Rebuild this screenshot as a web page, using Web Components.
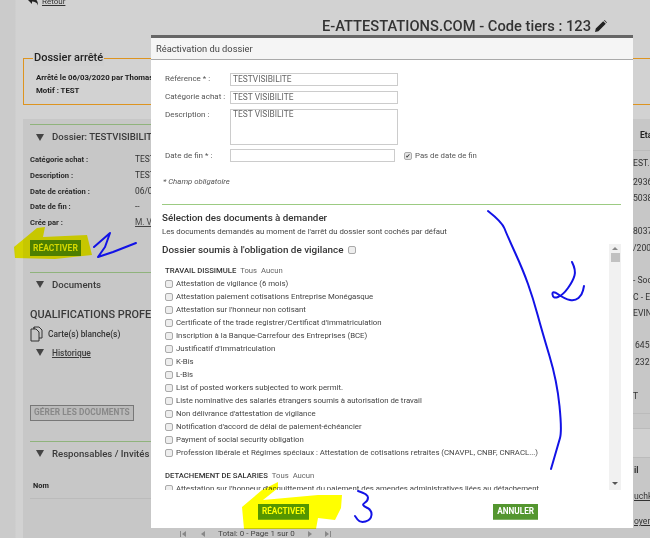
<!DOCTYPE html>
<html lang="fr">
<head>
<meta charset="utf-8">
<title>Réactivation du dossier</title>
<style>
  html, body { margin: 0; padding: 0; background: #d0d0d0; }
  body { font-family: Roboto, "Liberation Sans", sans-serif; overflow: hidden; }
</style>
</head>
<body>
<attest-page>
  <arret-box slot="top"></arret-box>
  <dossier-panel slot="left"></dossier-panel>
  <side-column slot="right"></side-column>
  <pager-bar slot="bottom"></pager-bar>
  <reactivation-modal slot="overlay"></reactivation-modal>
  <hand-notes slot="overlay"></hand-notes>
</attest-page>

<script>
// Page de fond : entete, encadre, deux colonnes, et ce qui passe par dessus
class AttestPage extends HTMLElement {
    constructor() {
        super();
        this.attachShadow({ mode: 'open' });
        this.shadowRoot.innerHTML = `
            <style>
                :host { display: block; position: relative; width: 650px; height: 538px; overflow: hidden; background: #d0d0d0; color: #333; filter: blur(.35px); }
                .rail { display: flex; flex-direction: column; height: 100%; padding-left: 15px; box-sizing: border-box; background: linear-gradient(90deg, #cbcbcb 0, #cbcbcb 15px, #d2d2d2 16px); }
                .head { height: 58px; padding-left: 12px; box-sizing: border-box; display: flex; justify-content: space-between; align-items: flex-start; }
                .back { display: flex; gap: 3px; font-size: 8px; margin-top: -6px; height: 14px; align-items: center; }
                .back a { color: #333; text-decoration: underline; }
                .title { margin: 16px 43px 0 0; font: 500 14.7px/20px Roboto, sans-serif; color: #333; display: flex; gap: 4px; align-items: center; white-space: nowrap; }
                .main { flex: none; height: 411px; display: grid; grid-template-columns: 129px 22px; justify-content: space-between; margin: 14px 0 0 8px; background: #c7c7c7; overflow: hidden; }
            </style>
            <div class="rail">
                <div class="head">
                    <div class="back">
                        <svg width="12" height="12" viewBox="0 0 12 12"><path d="M1 5 5 1v2.5c4 0 6 2 6 7-1-3-3-4-6-4V9z" fill="#222"/></svg>
                        <a>Retour</a>
                    </div>
                    <div class="title">E-ATTESTATIONS.COM - Code tiers : 123
                        <svg width="12" height="12" viewBox="0 0 12 12"><path d="M0 12l.8-3.4L8.2 1.2l2.6 2.6-7.4 7.4zM9 .5l.6-.5 2.4 2.4-.5.6z" fill="#222"/></svg>
                    </div>
                </div>
                <slot name="top"></slot>
                <div class="main">
                    <slot name="left"></slot>
                    <slot name="right"></slot>
                </div>
                <slot name="bottom"></slot>
            </div>
            <slot name="overlay"></slot>
        `;
    }
}
customElements.define('attest-page', AttestPage);

// Encadre orange "Dossier arrete"
class ArretBox extends HTMLElement {
    constructor() {
        super();
        this.attachShadow({ mode: 'open' });
        this.shadowRoot.innerHTML = `
            <style>
                :host { display: block; margin-left: 8px; height: 47px; border: 1px solid #dd9420; border-right: 0; box-sizing: border-box; position: relative; padding: 13px 0 0 12px; font: 700 7.8px/12.5px Roboto, sans-serif; color: #222; white-space: nowrap; }
                h2 { position: absolute; left: 9px; top: -9px; margin: 0; padding: 0 1px; background: #d0d0d0; font: 500 11px/16px Roboto, sans-serif; color: #222; }
            </style>
            <h2>Dossier arrêté</h2>
            <div>Arrêté le 06/03/2020 par Thomas</div>
            <div>Motif : TEST</div>
        `;
    }
}
customElements.define('arret-box', ArretBox);

// Titre de section depliable (triangle + libelle)
class FoldTitle extends HTMLElement {
    constructor() {
        super();
        this.attachShadow({ mode: 'open' });
        this.shadowRoot.innerHTML = `
            <style>
                :host { display: flex; align-items: center; gap: 8px; padding-left: 6px; font: 500 9.6px/14px Roboto, sans-serif; color: #3a3a3a; white-space: nowrap; }
                i { width: 0; height: 0; border: 4px solid transparent; border-top: 7px solid #444; border-bottom: 0; }
            </style>
            <i></i><slot></slot>
        `;
    }
}
customElements.define('fold-title', FoldTitle);

// Colonne gauche : on n'ecrit que ce qui depasse de la modale
class DossierPanel extends HTMLElement {
    constructor() {
        super();
        this.attachShadow({ mode: 'open' });
        this.shadowRoot.innerHTML = `
            <style>
                :host { display: block; padding: 5px 0 0 7px; overflow: hidden; white-space: nowrap; box-sizing: border-box; font: 400 7.6px/16px Roboto, sans-serif; color: #333; }
                .line { border-top: 1px solid #8fb37c; }
                .top { padding-top: 5px; }
                dl { margin: 8px 0 0; display: grid; grid-template-columns: 105px 1fr; grid-auto-rows: 15.8px; }
                dt { font-weight: 700; color: #2a2a2a; line-height: 15.8px; }
                dd { margin: 0; font-size: 8.4px; line-height: 15.8px; }
                dd u { color: #444; }
                .btn { display: inline-block; height: 16px; padding: 0 3px; line-height: 16px; background: #4d7f20; color: #d5d83a; font-size: 8.5px; font-weight: 700; }
                .qual { font: 500 10.9px/16px Roboto, sans-serif; color: #3a3a3a; margin-top: 15px; }
                .carte { display: flex; gap: 5px; align-items: center; font: 500 8.4px/16px Roboto, sans-serif; margin-top: 2px; height: 18px; }
                .gerer { display: inline-block; box-sizing: border-box; height: 16px; margin-top: 45px; padding: 0 3px; line-height: 13px; border: 1.5px solid #777; background: #bababa; color: #888; font-size: 8.3px; font-weight: 700; letter-spacing: .1px; }
                table { border-collapse: collapse; width: 100%; margin-top: 19px; }
                td { font: 700 7.4px/12px Roboto, sans-serif; color: #222; padding: 0 3px 6px; border-bottom: 1px solid #bbb; }
            </style>
            <div class="line top"><fold-title>Dossier: TESTVISIBILIT</fold-title></div>
            <dl>
                <dt>Catégorie achat :</dt><dd>TEST</dd>
                <dt>Description :</dt><dd>TEST</dd>
                <dt>Date de création :</dt><dd>06/0</dd>
                <dt>Date de fin :</dt><dd>--</dd>
                <dt>Crée par :</dt><dd><u>M. V</u></dd>
            </dl>
            <div style="margin-top:9px;height:16px"><span class="btn">RÉACTIVER</span></div>
            <div class="line" style="margin-top:16px;padding-top:5px"><fold-title>Documents</fold-title></div>
            <div class="qual">QUALIFICATIONS PROFES</div>
            <div class="carte">
                <svg width="13" height="16" viewBox="0 0 13 16"><path d="M4 3V1h5l3 3v8H9M4 1v2H1v12h8V6L6 3H4" fill="none" stroke="#333" stroke-width="1"/></svg>
                <span>Carte(s) blanche(s)</span>
            </div>
            <fold-title style="margin-top:3px;font-size:8.4px"><u>Historique</u></fold-title>
            <div><span class="gerer">GÉRER LES DOCUMENTS</span></div>
            <div class="line" style="margin-top:20px;padding-top:5px"><fold-title>Responsables / Invités</fold-title></div>
            <table><tr><td>Nom</td></tr></table>
        `;
    }
}
customElements.define('dossier-panel', DossierPanel);

// Bout de colonne droite qui depasse de la modale
class SideColumn extends HTMLElement {
    constructor() {
        super();
        this.attachShadow({ mode: 'open' });
        const rows = [
            ['Eta', 11, 'font-weight:700;color:#222;padding-left:9px'],
            ['EST.', 10, 'border-top:1px solid #bbb;padding-top:7px;padding-left:2px'],
            ['2936', 9, 'padding-left:2px'], ['5038', 6, 'padding-left:2px'], ['8037', 23, 'padding-left:2px'], ['/200', 7, 'padding-left:2px'],
            ['- Soc', 22, 'padding-left:2px'], ['C - E', 7, 'padding-left:2px'], ['EVIN', 6, 'padding-left:2px'],
            ['645', 22, 'padding-left:4px'], ['232', 7, 'padding-left:4px'],
            ['T', 24, 'padding-left:2px']
        ];
        this.shadowRoot.innerHTML = `
            <style>
                :host { display: block; overflow: hidden; white-space: nowrap; font: 400 8.6px/10px Roboto, sans-serif; color: #333; padding-left: 3px; box-sizing: border-box; }
                .rule { border-top: 1px solid #bbb; }
            </style>
            ${rows.map(r => `<div style="margin-top:${r[1]}px;${r[2]}">${r[0]}</div>`).join('')}
            <div class="rule" style="margin-top:12px;height:14px"></div>
            <div class="rule" style="height:28px;background:#d0d0d0"></div>
            <div style="font-weight:700;padding-left:3px;border-top:1px solid #bbb;padding-top:7px">il</div>
            <div style="margin-top:16px;text-decoration:underline;padding-left:3px">uchk</div>
            <div style="margin-top:15px;text-decoration:underline;padding-left:3px">oyer</div>
        `;
    }
}
customElements.define('side-column', SideColumn);

// Pagination du tableau, presque entierement sous la modale
class PagerBar extends HTMLElement {
    constructor() {
        super();
        this.attachShadow({ mode: 'open' });
        this.shadowRoot.innerHTML = `
            <style>
                :host { display: flex; align-items: center; flex: none; height: 8px; margin-left: 8px; padding-left: 156px; background: #c7c7c7; font: 400 8px/8px Roboto, sans-serif; color: #444; white-space: nowrap; overflow: hidden; }
                svg { flex: none; }
                span { margin: 0 12px; }
            </style>
            <svg width="8" height="8" viewBox="0 0 8 8" style="margin-right:13px"><path d="M1 1h1v6H1zM7 1v6L3 4z" fill="#888"/></svg>
            <svg width="6" height="8" viewBox="0 0 6 8"><path d="M5 1v6L1 4z" fill="#888"/></svg>
            <span>Total: 0 - Page 1 sur 0</span>
            <svg width="6" height="8" viewBox="0 0 6 8" style="margin-right:11px"><path d="M1 1v6l4-3z" fill="#888"/></svg>
            <svg width="8" height="8" viewBox="0 0 8 8"><path d="M1 1v6l4-3zM6 1h1v6H6z" fill="#888"/></svg>
        `;
    }
}
customElements.define('pager-bar', PagerBar);

// Case a cocher + libelle
class DocCheck extends HTMLElement {
    constructor() {
        super();
        this.attachShadow({ mode: 'open' });
        this.shadowRoot.innerHTML = `
            <style>
                :host { display: flex; align-items: center; gap: 3px; height: 13.03px; white-space: nowrap; font: 400 7.8px/13px Roboto, sans-serif; color: #444; }
                i { flex: none; width: 6px; height: 6px; border: 1px solid #aaa; border-radius: 2px; background: #eee; }
            </style>
            <i></i><span><slot></slot></span>
        `;
    }
}
customElements.define('doc-check', DocCheck);

// Titre de groupe de documents
class DocGroup extends HTMLElement {
    constructor() {
        super();
        this.attachShadow({ mode: 'open' });
        this.shadowRoot.innerHTML = `
            <style>
                :host { display: flex; gap: 4px; height: 13px; align-items: center; white-space: nowrap; font: 400 7.7px/13px Roboto, sans-serif; color: #666; }
                b { font-weight: 500; color: #333; }
            </style>
            <b><slot></slot></b><span>Tous</span><span>Aucun</span>
        `;
    }
}
customElements.define('doc-group', DocGroup);

// Modale de reactivation
class ReactivationModal extends HTMLElement {
    constructor() {
        super();
        this.attachShadow({ mode: 'open' });
        const docs = [
            'Attestation de vigilance (6 mois)',
            'Attestation paiement cotisations Entreprise Monégasque',
            'Attestation sur l\'honneur non cotisant',
            'Certificate of the trade registrer/Certificat d\'immatriculation',
            'Inscription à la Banque-Carrefour des Entreprises (BCE)',
            'Justificatif d\'immatriculation',
            'K-Bis',
            'L-Bis',
            'List of posted workers subjected to work permit.',
            'Liste nominative des salariés étrangers soumis à autorisation de travail',
            'Non délivrance d\'attestation de vigilance',
            'Notification d\'accord de délai de paiement-échéancier',
            'Payment of social security obligation',
            'Profession libérale et Régimes spéciaux : Attestation de cotisations retraites (CNAVPL, CNBF, CNRACL...)'
        ];
        this.shadowRoot.innerHTML = `
            <style>
                :host { display: flex; flex-direction: column; position: absolute; left: 151px; top: 35px; width: 482px; height: 493px; box-sizing: border-box; background: #fff; border-top: 3px solid #666; color: #444; font: 400 8px/13px Roboto, sans-serif; }
                header { flex: none; height: 22px; box-sizing: border-box; background: #f5f5f5; border-bottom: 1px solid #aaa; padding: 0 5px; font-size: 9.3px; line-height: 21px; color: #444; }
                .form { flex: none; padding: 13px 12px 0 14px; display: grid; grid-template-columns: 65px 168px auto; row-gap: 5px; }
                label { line-height: 11px; font-size: 8px; color: #555; white-space: nowrap; }
                .inp { box-sizing: border-box; height: 13px; border: 1px solid #ccc; padding: 0 2px; font-size: 8.4px; line-height: 11px; color: #666; }
                .area { height: 36px; line-height: 9px; }
                .date { width: 165px; margin-top: -1px; }
                .nofin { display: flex; align-items: center; gap: 3px; font-size: 7.8px; color: #555; margin-left: 6px; line-height: 11px; margin-top: -1px; white-space: nowrap; }
                .nofin i { width: 6px; height: 6px; border: 1px solid #aaa; border-radius: 2px; background: #e4e4e4; font: 700 6px/6px "DejaVu Sans", sans-serif; color: #333; text-align: center; }
                .req { flex: none; margin: 14px 0 0 12px; font-style: italic; font-size: 7.8px; line-height: 11px; color: #555; }
                .sel { flex: none; margin: 17px 12px 0 11px; border-top: 1px solid #9ccb82; padding-top: 6px; height: 33px; }
                h3 { margin: 0; font: 500 9.8px/13px Roboto, sans-serif; color: #333; }
                p { margin: 2px 0 0; font-size: 7.8px; line-height: 12px; color: #444; white-space: nowrap; }
                .oblig { display: flex; align-items: center; gap: 4px; height: 12px; margin: 0 0 8px -3px; font: 500 9.9px/12px Roboto, sans-serif; color: #333; white-space: nowrap; }
                .oblig i { width: 6px; height: 6px; border: 1px solid #aaa; border-radius: 2px; background: #eee; }
                .scroll { flex: none; display: flex; height: 246px; margin: 0 12px 0 11px; overflow: hidden; }
                .list { flex: 1; overflow: hidden; padding-left: 3px; min-width: 0; }
                .bar { flex: none; width: 12px; background: #f1f1f1; display: flex; flex-direction: column; align-items: center; }
                .bar b { width: 0; height: 0; border: 3px solid transparent; margin: 3px 0 0; }
                .up { border-bottom: 3px solid #888 !important; border-top: 0 !important; }
                .thumb { width: 9px; height: 9px; background: #c1c1c1; margin-top: 3px; }
                .down { border-top: 3px solid #555 !important; border-bottom: 0 !important; margin: auto 0 5px !important; }
                .gap { height: 10px; }
                footer { flex: 1; display: flex; justify-content: space-between; padding: 14px 95px 0 107px; }
                .go { box-sizing: border-box; height: 16px; padding: 0 4px; background: #54962f; color: #fff; border-bottom: 1px solid #7eb062; font: 700 8.2px/15px Roboto, sans-serif; }
            </style>
            <header>Réactivation du dossier</header>
            <div class="form">
                <label>Référence * :</label><div class="inp">TESTVISIBILITE</div><span></span>
                <label>Catégorie achat :</label><div class="inp">TEST VISIBILITE</div><span></span>
                <label>Description :</label><div class="inp area">TEST VISIBILITE</div><span></span>
                <label>Date de fin * :</label><div class="inp date"></div><div class="nofin"><i>✔</i>Pas de date de fin</div>
            </div>
            <div class="req">* Champ obligatoire</div>
            <div class="sel">
                <h3>Sélection des documents à demander</h3>
                <p>Les documents demandés au moment de l'arrêt du dossier sont cochés par défaut</p>
            </div>
            <div class="scroll">
                <div class="list">
                    <div class="oblig">Dossier soumis à l'obligation de vigilance <i></i></div>
                    <doc-group>TRAVAIL DISSIMULE</doc-group>
                    ${docs.map(d => `<doc-check>${d}</doc-check>`).join('')}
                    <div class="gap"></div>
                    <doc-group>DETACHEMENT DE SALARIES</doc-group>
                    <doc-check>Attestation sur l'honneur d'acquittement du paiement des amendes administratives liées au détachement</doc-check>
                </div>
                <div class="bar"><b class="up"></b><div class="thumb"></div><b class="down"></b></div>
            </div>
            <footer>
                <div class="go">RÉACTIVER</div>
                <div class="go">ANNULER</div>
            </footer>
        `;
    }
}
customElements.define('reactivation-modal', ReactivationModal);

// Trait lisse a partir de points releves sur la capture
function smoothPath(pts) {
    let d = `M${pts[0][0]} ${pts[0][1]}`;
    for (let i = 1; i < pts.length - 1; i++) {
        const mx = (pts[i][0] + pts[i + 1][0]) / 2;
        const my = (pts[i][1] + pts[i + 1][1]) / 2;
        d += ` Q${pts[i][0]} ${pts[i][1]} ${mx} ${my}`;
    }
    const last = pts[pts.length - 1];
    return d + ` L${last[0]} ${last[1]}`;
}

// Annotations a la main, par dessus toute la capture
class HandNotes extends HTMLElement {
    constructor() {
        super();
        this.attachShadow({ mode: 'open' });
        const two = [[572, 262], [576, 270], [573, 281], [563, 295], [553, 299], [552, 290], [565, 299], [575, 301], [582, 295], [584, 286]];
        const three = [[358, 491], [368, 494], [368, 501], [361, 505], [372, 510], [371, 520], [360, 523], [355, 516]];
        const long = [[488, 211], [502, 222], [507, 235], [523, 270], [533, 298], [542, 331], [557, 381], [562, 431], [558, 445], [551, 469]];
        this.shadowRoot.innerHTML = `
            <style>
                :host { display: block; position: absolute; inset: 0; pointer-events: none; }
                svg { position: absolute; left: 0; top: 0; }
                .hl { mix-blend-mode: multiply; }
                .pen { fill: none; stroke: #1212e6; stroke-width: 2; stroke-linecap: round; stroke-linejoin: round; }
            </style>
            <svg class="hl" width="650" height="538">
                <path d="M15 258 14 247 37 228 45 227 43 237 87 235 92 255 55 259z" fill="#ffff00"/>
                <path d="M242 507 262 490 278 482 278 488 263 500 318 495 342 495 341 508 335 520 318 518 316 529 244 529z" fill="#ffff00"/>
            </svg>
            <svg width="650" height="538">
                <path class="pen" d="M94 247 110 233 105 247 98 257 113 252 136 243"/>
                <path class="pen" d="${smoothPath(long)}"/>
                <path class="pen" d="${smoothPath(two)}"/>
                <path class="pen" d="${smoothPath(three)}"/>
            </svg>
        `;
    }
}
customElements.define('hand-notes', HandNotes);
</script>
</body>
</html>
